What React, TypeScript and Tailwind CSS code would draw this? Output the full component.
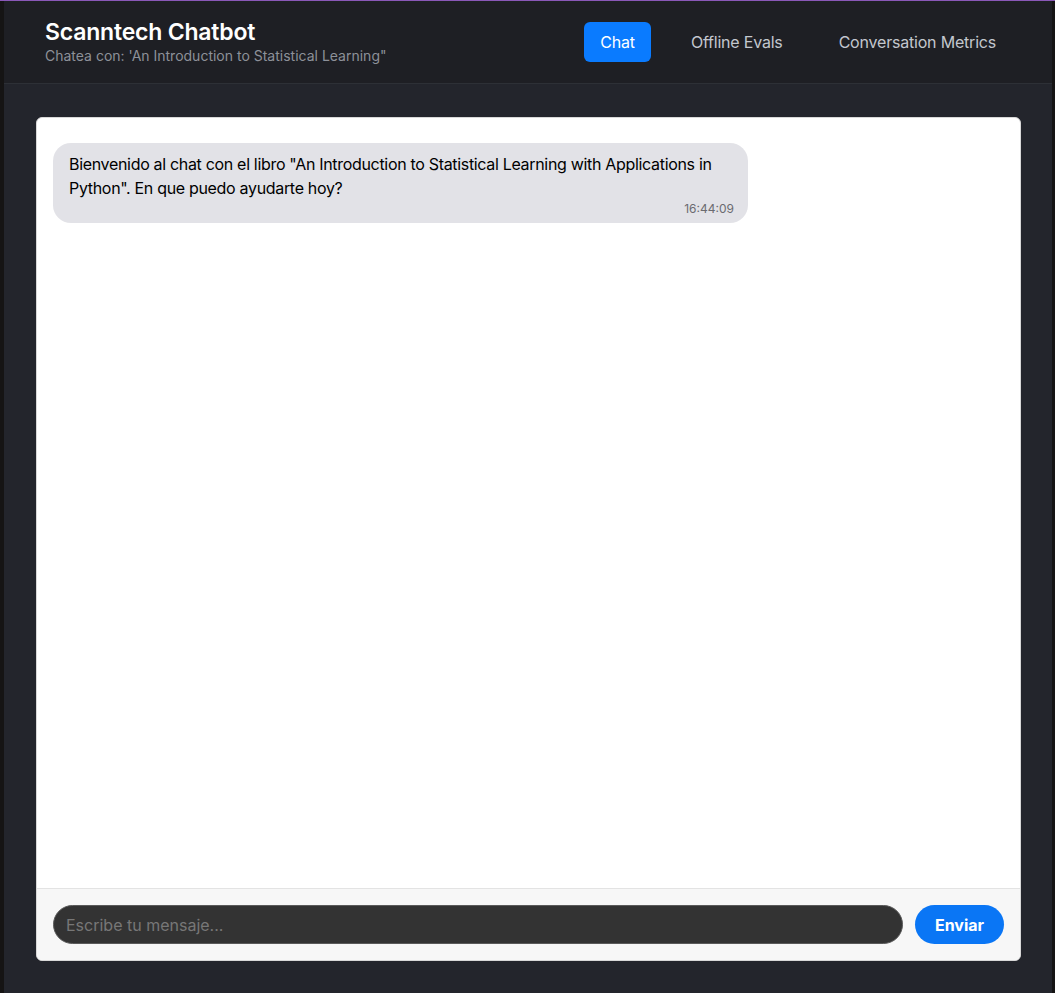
import React, { useState } from 'react';

type Msg = { id: number; text: string; time: string };

const App = () => {
  const [tab, setTab] = useState('chat');
  const [input, setInput] = useState('');
  const [messages] = useState<Msg[]>([
    {
      id: 1,
      text: 'Bienvenido al chat con el libro "An Introduction to Statistical Learning with Applications in Python". En que puedo ayudarte hoy?',
      time: '16:44:09',
    },
  ]);

  const tabs = [
    { key: 'chat', label: 'Chat' },
    { key: 'evals', label: 'Offline Evals' },
    { key: 'metrics', label: 'Conversation Metrics' },
  ];

  return (
    <div className="flex flex-col h-[993px] w-full bg-[#151515] font-['Inter','Noto_Sans',sans-serif]">
      <div className="h-px bg-[#8a58b8]" />
      <div className="flex flex-1 min-h-0">
        <div className="w-[4px] bg-[#151414]" />
        <div className="flex flex-col flex-1 min-w-0">
          {/* header */}
          <header className="flex items-center justify-between h-[83px] px-10 bg-[#1e1f24] border-b border-[#2d3036]">
            <div className="pl-px">
              <h1 className="text-[23px] leading-7 font-semibold text-white tracking-[-0.2px]">Scanntech Chatbot</h1>
              <p className="text-sm leading-5 text-[#8d9199]">Chatea con: 'An Introduction to Statistical Learning"</p>
            </div>
            <nav className="flex items-center gap-6 tracking-[-0.2px]">
              {tabs.map((t) => (
                <button
                  key={t.key}
                  onClick={() => setTab(t.key)}
                  className={
                    tab === t.key
                      ? 'h-10 px-4 rounded-md bg-[#0a7bff] text-white text-base'
                      : 'h-10 px-4 rounded-md text-[#c3c7ce] text-base'
                  }
                >
                  {t.label}
                </button>
              ))}
            </nav>
          </header>

          {/* main */}
          <main className="flex-1 min-h-0 bg-[#23252c] pl-8 pr-[31px] pt-[33px] pb-[32px]">
            <div className="flex flex-col h-full bg-white rounded-md overflow-hidden border border-[#d8d8d8]">
              <div className="flex-1 overflow-y-auto pt-[25px] px-4">
                {messages.map((m) => (
                  <div key={m.id} className="max-w-[695px] bg-[#e2e2e7] rounded-[18px] px-4 pt-[9px] pb-[6px]">
                    <p className="text-base leading-6 text-black tracking-[-0.32px]">{m.text}</p>
                    <div className="text-right text-xs leading-4 text-[#6b6b70] mt-[1px] -mr-[2px]">{m.time}</div>
                  </div>
                ))}
              </div>
              <div className="flex items-center gap-3 p-4 bg-[#f7f7f7] border-t border-[#e3e3e3]">
                <input
                  value={input}
                  onChange={(e) => setInput(e.target.value)}
                  placeholder="Escribe tu mensaje..."
                  className="flex-1 h-[39px] px-3 rounded-full bg-[#333333] border border-[#5a5a5a] text-white text-base placeholder:text-[#777777] outline-none"
                />
                <button className="h-[39px] w-[89px] rounded-full bg-[#0a76f5] text-white text-base font-bold">Enviar</button>
              </div>
            </div>
          </main>
        </div>
        <div className="w-[3px] bg-[#151414]" />
      </div>
    </div>
  );
};

export default App;
